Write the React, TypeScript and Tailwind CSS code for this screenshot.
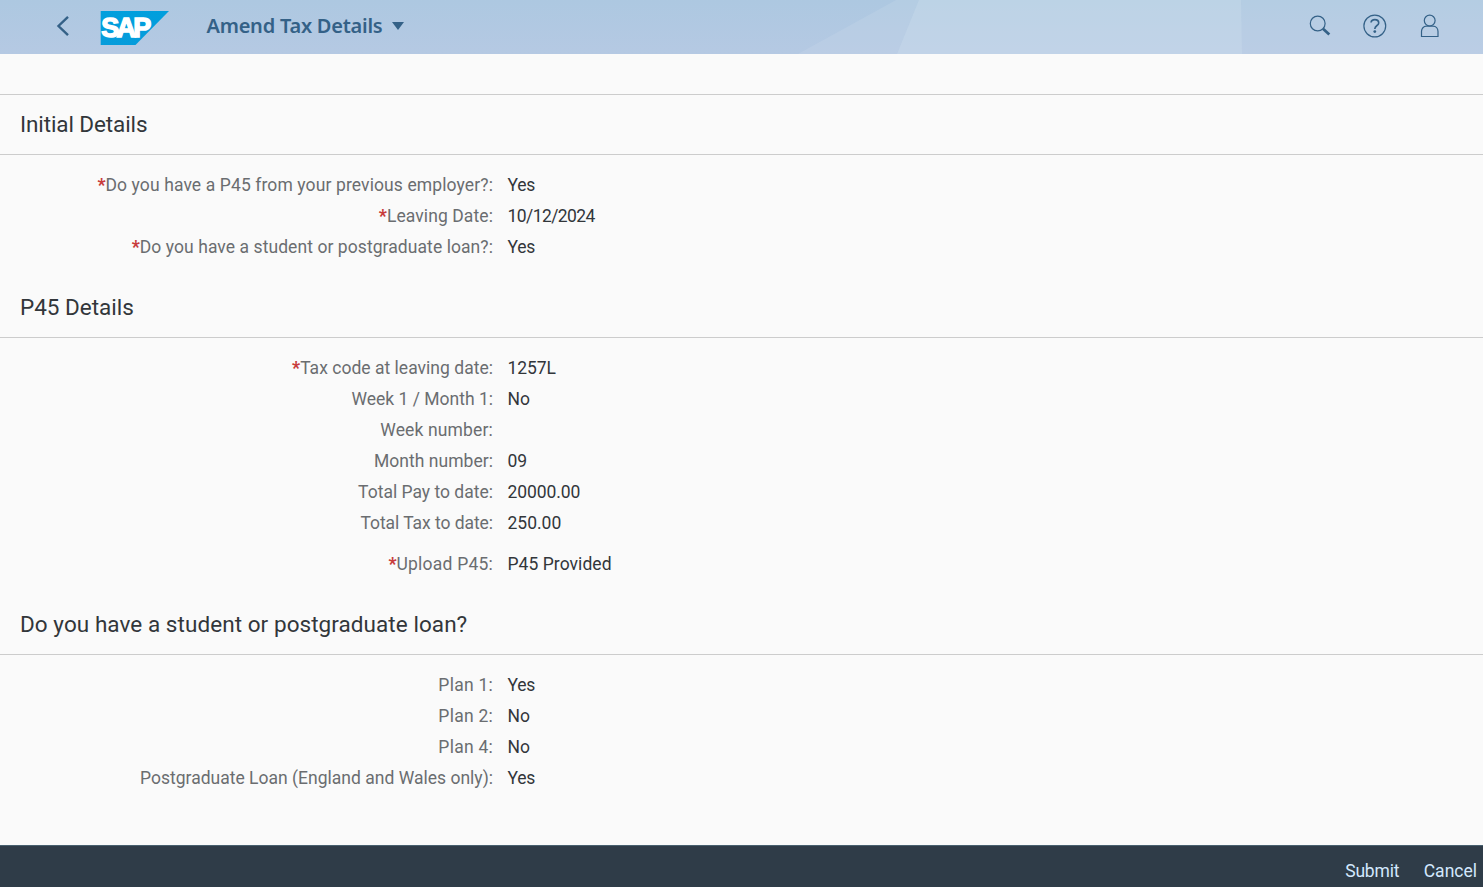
import React from 'react';

interface Field {
  label: string;
  value: string;
  required?: boolean;
  spaced?: boolean;
  labelClass?: string;
  valueClass?: string;
}

interface Section {
  title: string;
  titleClass?: string;
  fields: Field[];
}

const sections: Section[] = [
  {
    title: 'Initial Details',
    titleClass: 'tracking-[-0.1px]',
    fields: [
      { label: 'Do you have a P45 from your previous employer?', value: 'Yes', required: true, labelClass: 'tracking-[0.11px]', valueClass: 'tracking-[-0.3px]' },
      { label: 'Leaving Date', value: '10/12/2024', required: true, labelClass: 'tracking-[0.09px]', valueClass: 'tracking-[-0.58px]' },
      { label: 'Do you have a student or postgraduate loan?', value: 'Yes', required: true, labelClass: 'tracking-[0.07px]', valueClass: 'tracking-[-0.3px]' },
    ],
  },
  {
    title: 'P45 Details',
    fields: [
      { label: 'Tax code at leaving date', value: '1257L', required: true, labelClass: 'tracking-[0.02px]', valueClass: 'tracking-[-0.1px]' },
      { label: 'Week 1 / Month 1', value: 'No' },
      { label: 'Week number', value: '', labelClass: 'tracking-[0.15px]' },
      { label: 'Month number', value: '09', labelClass: 'tracking-[0.04px]' },
      { label: 'Total Pay to date', value: '20000.00', valueClass: 'tracking-[-0.08px]' },
      { label: 'Total Tax to date', value: '250.00', labelClass: 'tracking-[-0.06px]' },
      { label: 'Upload P45', value: 'P45 Provided', required: true, spaced: true, labelClass: 'tracking-[0.22px]', valueClass: 'tracking-[0.05px]' },
    ],
  },
  {
    title: 'Do you have a student or postgraduate loan?',
    titleClass: 'tracking-[0.06px]',
    fields: [
      { label: 'Plan 1', value: 'Yes', labelClass: 'tracking-[0.25px]', valueClass: 'tracking-[-0.3px]' },
      { label: 'Plan 2', value: 'No', labelClass: 'tracking-[0.25px]' },
      { label: 'Plan 4', value: 'No', labelClass: 'tracking-[0.25px]' },
      { label: 'Postgraduate Loan (England and Wales only)', value: 'Yes', labelClass: 'tracking-[0.01px]', valueClass: 'tracking-[-0.3px]' },
    ],
  },
];

const SapLogo: React.FC = () => (
  <svg className="block" width="70" height="34" viewBox="0 0 70 34">
    <defs>
      <linearGradient id="sap" x1="0" y1="0" x2="0" y2="1">
        <stop offset="0" stopColor="#009fdd" />
        <stop offset="1" stopColor="#069cdb" />
      </linearGradient>
    </defs>
    <path d="M0.700 0H69L35.500 34H0.700Z" fill="url(#sap)" />
    <g fontFamily="Liberation Sans, sans-serif" fontWeight="700" fontSize="27" fill="#fff" stroke="#fff" strokeWidth="1.500">
      <text x="1.300" y="26.300" textLength="50" lengthAdjust="spacing">
        SAP
      </text>
    </g>
  </svg>
);

const Header: React.FC = () => (
  <header className="relative h-[54px] shrink-0 bg-linear-to-b from-[#adc8e1] to-[#b5c9e3] text-[#346187]">
    <svg className="absolute inset-0" width="1483" height="54" viewBox="0 0 1483 54">
      <path d="M896 0H1483V54H798Z" fill="#fff" fillOpacity="0.09" />
      <path d="M919 0H1241L1242 54H897Z" fill="#d0e0ef" fillOpacity="0.3" />
    </svg>
    <div className="relative flex h-[52px] items-center pl-[55px] pr-[41px]">
      <button aria-label="Back">
        <svg className="block" width="16" height="22" viewBox="0 0 16 22" fill="none" stroke="currentColor" strokeWidth="2.400">
          <path d="M13 1.800L3.500 11L13 20.200" />
        </svg>
      </button>
      <div className="ml-[29px] mt-[4px]">
        <SapLogo />
      </div>
      <button className="ml-[36.500px] flex items-center">
        <span className="font-['Noto_Sans'] text-[20px] font-semibold leading-[26px] tracking-[-0.24px]">Amend Tax Details</span>
        <svg className="ml-[10px] block" width="12" height="8" viewBox="0 0 12 8" fill="currentColor">
          <path d="M0 0H12L6 8Z" />
        </svg>
      </button>
      <div className="ml-auto flex items-center gap-[31px]">
        <button aria-label="Search">
          <svg className="block" width="24" height="24" viewBox="0 0 24 24" fill="none" stroke="currentColor">
            <circle cx="9.700" cy="9.500" r="7.400" strokeWidth="1.200" />
            <path d="M15 14.800L21.300 20.500" strokeWidth="2.800" />
          </svg>
        </button>
        <button aria-label="Help">
          <svg className="block" width="24" height="24" viewBox="0 0 24 24" fill="none" stroke="currentColor">
            <circle cx="11.800" cy="12" r="10.900" strokeWidth="1.200" />
            <path d="M8 8.500C8.300 6.300 9.800 5.600 11.800 5.600C14.200 5.600 15.700 6.900 15.700 8.900C15.700 11.600 11.800 11.500 11.800 15" strokeWidth="1.600" />
            <circle cx="11.800" cy="17.600" r="1.400" fill="currentColor" stroke="none" />
          </svg>
        </button>
        <button aria-label="User">
          <svg className="block" width="24" height="24" viewBox="0 0 24 24" fill="none" stroke="currentColor" strokeWidth="1.200">
            <circle cx="11.700" cy="6.600" r="5.400" />
            <path d="M3.500 22.500V17.500C3.500 14.500 5.500 12.200 8.500 12.200H15C18 12.200 20 14.500 20 17.500V22.500Z" />
          </svg>
        </button>
      </div>
    </div>
  </header>
);

const FieldRow: React.FC<{ field: Field }> = ({ field }) => (
  <div className={`flex h-[31px] items-center text-[17.500px] ${field.spaced ? 'mt-[10px]' : ''}`}>
    <div className="flex w-[493px] justify-end whitespace-nowrap text-[#6a6d70]">
      {field.required && <span className="font-extrabold text-[#c83c3c]">*</span>}
      <span className={field.labelClass}>{field.label}:</span>
    </div>
    <div className={`pl-[14.500px] text-[#32363a] ${field.valueClass ?? ''}`}>{field.value}</div>
  </div>
);

const FormSection: React.FC<{ section: Section }> = ({ section }) => (
  <section className="pb-[15px]">
    <h2 className={`flex h-[60px] items-center border-b border-[#cccccc] pl-[20px] text-[22.500px] text-[#32363a] ${section.titleClass ?? ''}`}>
      {section.title}
    </h2>
    <div className="pt-[15px]">
      {section.fields.map((field) => (
        <FieldRow key={field.label} field={field} />
      ))}
    </div>
  </section>
);

export default function App() {
  return (
    <div className="flex h-screen flex-col overflow-hidden bg-[#fafafa] font-[Roboto,sans-serif]">
      <Header />
      <main className="mt-[40px] flex-1 border-t border-[#cccccc]">
        {sections.map((section) => (
          <FormSection key={section.title} section={section} />
        ))}
      </main>
      <footer className="flex h-[42px] shrink-0 items-center justify-end gap-[24.500px] border-t border-[#48606f] bg-[#2f3c48] pr-[6px] pt-[10px] text-[17.500px] text-[#d3e8fd]">
        <button className="tracking-[-0.2px]">Submit</button>
        <button>Cancel</button>
      </footer>
    </div>
  );
}
